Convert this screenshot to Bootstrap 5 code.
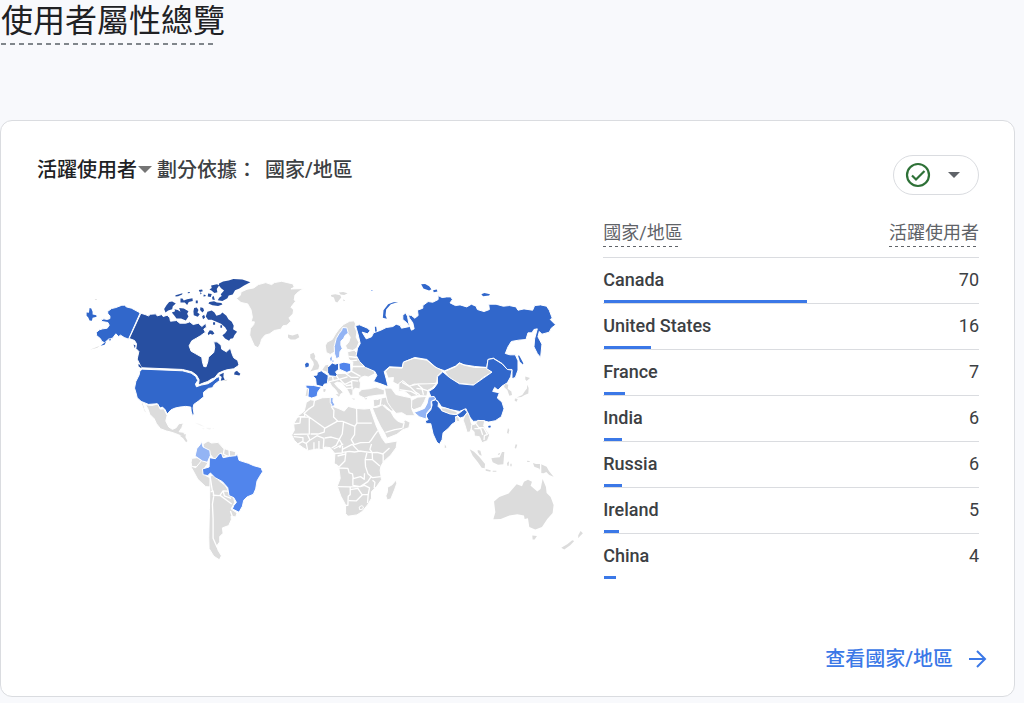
<!DOCTYPE html>
<html lang="zh-Hant">
<head>
<meta charset="utf-8">
<meta name="viewport" content="width=device-width, initial-scale=1">
<title>使用者屬性總覽</title>
<link href="https://cdn.jsdelivr.net/npm/bootstrap@5.3.0/dist/css/bootstrap.min.css" rel="stylesheet">
<style>
  body { background: #f8f9fc; color: #202124; font-family: Roboto, "Noto Sans CJK TC", sans-serif; }
  .page-head { padding-left: 1px; }
  .page-title { font-size: 32px; line-height: 43px; font-weight: 400; }
  .dashes { height: 2px; margin-right: 11px; background: repeating-linear-gradient(90deg, #80868b 0 5px, transparent 5px 9px); }
  .dashes-sm { height: 1px; margin-right: 2px; background: repeating-linear-gradient(90deg, #5f6368 0 3px, transparent 3px 6px); }
  .overview { margin: 75px 9px 6px 0; border: 1px solid #dadce0; border-radius: 12px; --bs-card-inner-border-radius: 11px; }
  .overview-head { padding: 34px 35px 0 36px; }
  .overview-main { padding: 25px 35px 0 36px; }
  .overview-foot { padding: 64px 27px 22px; }
  .heading { font-size: 20px; line-height: 30px; font-weight: 500; }
  .metric { color: #202124; font-weight: 500; line-height: 30px; font-size: 20px; }
  .split { color: #3c4043; }
  .status { width: 86px; height: 40px; border: 1px solid #dadce0; padding: 0 17px 0 11px; }
  .data-col { flex: 0 0 40%; padding-left: 1px; }
  .map { flex: 1 1 0; min-width: 0; }
  .users { color: #3c4043; font-size: 18px; line-height: 26px; }
  .users th, .users td { padding: 0; }
  .users thead tr { height: 37px; border-bottom: 1px solid #dadce0; }
  .users thead th { color: #5f6368; font-weight: 400; vertical-align: top; }
  .users tbody tr { position: relative; height: 46px; border-bottom: 1px solid #dadce0; }
  .users tbody tr:last-child { border-bottom-color: transparent; }
  .users tbody th { font-weight: 500; }
  .users tbody th, .users tbody td { vertical-align: middle; }
  .meter { position: absolute; left: 1px; bottom: -1px; height: 3px; background: #3b78e7; }
  .more { color: #3b78e7; font-size: 20px; line-height: 30px; font-weight: 500; }
  .land { fill: #dcdcdc; } .b1 { fill: #93b4f4; } .b2 { fill: #5185ec; } .b3 { fill: #3167cb; } .b4 { fill: #274fa1; }
  .map path { stroke: #fff; stroke-width: 3; stroke-linejoin: round; }
  .map .bits { stroke: none; }
  .map .borders { fill: none; stroke-width: 4; }
</style>
</head>
<body>
<header class="page-head d-flex">
  <div>
    <h1 class="page-title m-0">使用者屬性總覽</h1>
    <div class="dashes"></div>
  </div>
</header>
<main class="card overview">
  <div class="overview-head d-flex justify-content-between align-items-start">
    <h2 class="heading m-0 d-flex align-items-center">
      <button class="metric btn border-0 p-0 d-flex align-items-center" type="button">活躍使用者<svg width="16" height="8" viewBox="0 0 16 8" aria-hidden="true"><path d="M1 0h14L8 7z" fill="#757575"/></svg></button>
      <span class="split d-flex gap-2 ms-1"><span>劃分依據：</span><span>國家/地區</span></span>
    </h2>
    <button class="status btn rounded-pill bg-white d-flex align-items-center justify-content-between" type="button" aria-label="資料品質">
      <svg width="26" height="26" viewBox="0 0 26 26" fill="none" stroke="#2e7137" stroke-width="2.2" aria-hidden="true"><circle cx="13" cy="13" r="11"/><path d="M7 13.500l4 4 8.500-8.500"/></svg>
      <svg width="14" height="8" viewBox="0 0 14 8" aria-hidden="true"><path d="M1 1h12L7 7z" fill="#5f6368"/></svg>
    </button>
  </div>
  <div class="overview-main d-flex">
    <svg class="map" viewBox="37 220 566 360" role="img" aria-label="各國活躍使用者地圖">
      <!-- North America -->
      <g transform="translate(80 270) scale(.33333)">
        <path class="b3" d="M83 125L95 116 108 113 126 106 134 106 140 111 155 115 181 129 146 208 133 203 122 196 116 200 108 192 98 205 86 208 74 219 65 214 62 207 50 197 49 188 58 180 68 177 82 175 88 166 84 158 66 155 64 150 72 147 82 149 90 146 90 138 84 132z"/>
        <path class="b3 bits" d="M20 128L27 129 29 114 34 116 38 126 38 134 49 136 50 141 38 144 36 153 29 152 25 143 20 138zM62 228l17-13-5 10zM88 208l6-2-4 8z"/>
        <path class="land bits" d="M30 240l30-12-8 6zM45 88h6v2h-6z"/>
        <path class="b4" d="M183 130L196 134 206 138 212 133 228 132 232 138 246 134 250 140 262 136 270 144 272 154 290 152 300 160 318 160 330 156 340 164 356 160 366 170 378 160 380 172 372 178 377 187 362 198 350 205 336 213 328 228 334 244 348 252 366 262 368 276 372 290 379 291 384 276 386 262 402 248 405 232 402 216 412 216 424 226 426 238 440 246 452 235 457 252 462 264 474 272 478 286 462 297 442 300 430 304 416 310 405 324 395 328 384 335 370 340 356 346 358 330 350 316 336 306 308 299 186 294 180 284 172 268 177 245 168 236 170 222 164 212 148 206z"/>
        <path class="b4 bits" d="M418 41l12-6 17-3 14-5 27 2 24 8-19 10-14 9-13 5-7 13-12 3-4 8-15 8-14-2 5-8 7-5-3-5 10-11-9-7-7-9zM394 47l18-4 6 4-7 10 2 10-9 2-9-7-6-3 7-5zM385 71l11 1-3 9-9-1zM397 81l5-3 3 12-7-1zM389 96l14-2 8 4 14 1 3 5-13 4-17-2-12-5zM372 74l6 2-1 3-6 1zM357 60l10-1 2 5-9 2zM361 67l5 3-4 4zM324 67l6-1 0 3-6 1zM287 76l11-3 10-3-1 4-12 5-8 1zM302 86l6 0 4 6 10-4 16-3 1 8-12 3-5 9-7-7-13 0zM253 117l7-11 8-10 9-1 11 6-9 8-2 9-12 4-8 6zM276 128L286 124 284 118 294 120 302 126 298 114 312 116 326 124 322 132 326 140 318 152 304 146 290 146 284 138zM348 92h6v8h-6zM343 114l8-1 5 7-3 8 7 5-6 8-12-5-1-12zM362 112l8 2 3 8-5 6-7-8zM367 139l6-4 3 8-6 5zM383 126L396 122 404 128 410 138 422 134 428 128 440 138 446 148 456 156 462 168 460 178 472 186 464 196 460 205 452 207 448 213 436 206 428 196 436 190 442 182 436 172 424 162 410 156 396 150 385 150 378 140zM384 190l6-9 8 2 6 8-6 4-7-3-5 4zM400 157h6v8h-6zM422 166h5v8h-5zM465 307l7-4 3 4 7 5-3 5-16-3zM418 316l14-7-1 13 4 8-12 3 3-11zM161 224l6 3-2 8zM176 282l9 8-1 5-8-6z"/>
        <path class="b3" d="M187 298L308 303 334 310 348 320 354 332 347 343 350 351 364 346 384 342 398 334 410 324 418 320 420 332 404 344 398 354 386 356 371 368 372 381 356 394 342 404 340 415 343 434 338 437 334 424 333 412 318 410 300 412 286 415 274 420 262 433 256 420 248 412 240 415 232 402 206 404 184 395 172 384 168 368 164 355 168 335 178 315 180 304z"/>
        <path class="land" d="M197 405l19 2 18-4 7 15 11-1 10 20-4 17 9 18 11 7 11-5 8-12 14-2-5 14-8 12 15 2 2 15 10 12-9-2-9-13-19-8-15-5-13-3-18-7-12-15-7-15-13-13-6-17zM183 396l7 5 5 18 6 12-7-5z"/>
        <path class="land bits" opacity=".3" d="M345 459l15 4 15 8-12-3zM380 474l14 1-3 5-10-3zM367 475l8 2-5 2zM398 475l5 1-3 2z"/>
        <path class="land bits" d="M426 334l18-5-5 5z"/>
      </g>
      <!-- Greenland, Europe and the Near East -->
      <g transform="translate(240 270) scale(.33333)">
        <path class="land" d="M-10 86L2 76 4 66 22 58 42 54 56 44 78 38 96 44 104 38 126 34 160 42 164 52 154 57 192 56 176 66 166 76 164 90 168 94 160 104 154 112 162 120 160 132 148 144 154 154 142 166 130 168 124 178 104 182 90 192 76 196 66 208 62 222 55 234 44 228 36 210 30 196 32 176 42 164 44 156 34 156 38 142 34 120 24 102 4 98z"/>
        <path class="land bits" d="M145 194l14 3 16-5 4 10-12 7-14 0-8-6zM274 75l13-2 15 3 3 7-12 15-6-3-4-12-8-3zM298 68l13-2 13 4-10 5-11-1zM311 88l6 4-5 2zM212 253l10-4 5 10-2 8 8 7 6 14-3 10-10 3-14 4 6-9 5-12-2-8-9-12zM196 347l6 2 0 8-4 22 9-1 2-23z"/>
        <path class="land" d="M257 228L262 217 278 209 288 192 298 178 312 164 330 154 344 153 348 162 346 172 352 186 350 202 358 218 352 234 340 242 322 238 318 228 328 216 332 202 324 190 312 184 300 196 292 222 286 246 272 254 260 248z"/>
        <path class="b1" d="M290 206L298 192 306 182 309 173 322 174 326 190 317 196 312 206 304 214 304 226 308 236 301 246 300 262 290 267 285 252 284 230z"/>
        <path class="land" d="M324 246l20-5 8 8 2 15 13 7 5 14 12 11 20 5 2 11-20 10-10-3-12 4-5 8 4 9-2 18-14-3-7 7 0 14-8 1-9-17-16-20-14-3-8 4 10 12 9 7 7 8-13 9-10-17-12-11-5-10-7 0-2-10 5-8 16-2 7-8 18 0 19-1 10-7 3-26-13-9z"/>
        <path class="borders" d="M327 260l26 3M329 274l24-3M335 290l40 0M335 304l28 16M291 318l7 11 26-8M315 309l20 14 22 0M302 330l14 14 22-11M336 332l2 28M318 348l20-3M267 336l30-7M356 334l-20-2M279 319l2 14M317 356l24-1"/>
        <path class="b3" d="M219 317l13-1 1-8 12-5 10 7 11 7-1 10-2 15-9 1-4 8-20-5-2-19z"/>
        <path class="b3" d="M264 292l8-6 5-7 10 4 10-3 0 19-9 7 5 9-5 5-18-2-6-10z"/>
        <path class="b2" d="M298 281l15-4 20 4 1 22-12 5-23-10z"/>
        <path class="b2" d="M199 346l23 1 23 5-10 14-3 14-16 5-11-4 2-24-8-3z"/>
        <path class="b3 bits" d="M196 283l6-5 6 4-1 8-9 3z"/>
        <path class="b1 bits" d="M271 266l5-7 1 10-3 6zM278 272h4v4h-4zM395 60h4v3h-4z"/>
        <path class="land bits" d="M248 301l9-14 9-2-2 22-7-3zM288 373l14 1-4 7zM252 357l7 2-3 8-5-2zM336 386l10 1-2 3zM373 387l10-3-3 5z"/>
      </g>
      <!-- Africa and Arabia -->
      <g transform="translate(280 380) scale(.33333)">
        <path class="land" d="M80 68L92 60 106 62 128 54 152 53 162 60 160 80 176 86 194 94 206 80 230 86 254 88 272 86 278 104 290 138 300 160 308 176 318 190 353 184 350 204 334 226 312 246 304 260 302 272 306 300 292 320 276 336 276 356 264 376 248 396 232 406 205 410 198 402 198 376 184 350 173 320 182 296 178 266 164 250 166 222 152 204 136 202 130 210 112 208 86 213 70 204 54 192 44 182 36 166 44 152 42 132 56 108 74 94z"/>
        <path class="borders" d="M105 60l-3 18-16 11-14 13M52 111h23v-9M43 132l18-2 2-18M75 102l60 43M65 112h24M89 113v50l-47 1M93 163l22 0 19-6 1-13M155 80l8 12-1 20 12 12-39 22M231 84l1 46h45M173 125l16 0 37 15 6-10M192 126l-4 37-9 16 8 14-7 12M226 140l-1 25-10 15 9 15 19-6 26-1 7-8 8-12 11-15M135 175l20-3 24 7M179 179l-9 18-14 8M133 176l-2 31M92 181l20-13 21 8M83 163l8 18-11 10 4 20M103 188v22M118 184v24M42 171l28 3 0 11M52 195l16-9 13 6M162 208l29-15M160 222l28-2 1-22M187 210l31-16 20 21-13 2-16-2-20 3M199 218l-3 26-18 18-10-8M198 223l-24 6M239 214l38 5 16-1 17 5 20-18M276 193l-5 16 7 10 1 21M311 222v26M262 220l-5 20 22 0 22 19M257 241l1 20 7 21 14 12 25-3M178 265l27 1 4 14 10 3 2 14 22-6 11 8 1-18M220 296v21l22 4 23-15 10-15M174 321l36 1 32-1M212 322l0 23-6 5-1 27-12 1M213 330l22-4 13 20-18 18-22-1M242 321l13-4 15 8-4 20-17 0M266 345l-2 25M279 302l7 6-2 18"/>
        <path class="land" d="M239 382l8-4 5 4-3 7-9 1z"/>
        <path class="land" d="M350 301l2 10-7 20-11 27-11 3-4-12 5-13 0-13 13-7z"/>
        <path class="b1" d="M152 54l9-1-1 12 5 9-5 9-8-15z"/>
        <path class="land" d="M237 39l10-10 22-2 21-5 25 9-1 14-18 1-27 4-14 5-17-8zM281 60l43-9 14 23 10 18-13 2-20-18-15 8-17-2z"/>
        <path class="land" d="M278 84L295 82 308 75 322 88 334 96 344 114 356 125 370 130 376 120 392 128 388 144 370 150 352 164 322 176 315 160 304 142 292 118z"/>
        <path class="borders" d="M305 56l-3 20-21 8M318 158l28-8 22-4M352 120l22 8-4 18"/>
        <path class="land" d="M315 25l20 0 14 19 20 5 25 5 5 18-2 16 9 20-24 0-15-9-17 2-15-17-11-16-6-25z"/>
        <path class="land" d="M397 61l18-9 26-2-6 15-10 17-22 8-7-6z"/>
      </g>
      <!-- Asia -->
      <g transform="translate(350 275) scale(.33333)">
        <path class="b3" d="M18 152L30 150 54 160 62 168 54 177 38 172 50 192 66 186 72 174 94 166 110 158 130 155 140 148 152 152 156 160 180 155 172 144 160 134 160 122 168 114 174 124 178 146 186 166 194 162 190 144 180 130 176 120 186 122 196 130 206 122 204 106 220 100 220 92 236 80 250 82 266 74 266 62 278 68 292 66 304 66 309 74 302 84 318 92 332 90 352 96 366 88 380 94 384 104 404 110 420 104 418 88 440 88 462 94 480 92 500 96 506 106 524 102 550 106 556 92 574 90 592 94 600 106 609 130 603 134 619 150 606 160 600 172 578 178 570 170 566 186 578 208 574 248 564 236 554 216 556 192 564 162 554 164 548 174 536 174 530 194 508 196 486 200 476 216 468 236 482 240 498 240 506 258 506 286 498 308 488 312 488 284 474 284 458 266 432 250 416 254 412 278 376 275 344 270 330 264 318 274 286 288 262 280 232 254 196 248 162 262 158 278 120 276 104 290 110 312 116 336 96 328 72 320 82 302 76 290 48 278 30 260 20 242 24 220 32 206 26 180z"/>
        <path class="b3 bits" d="M146 81L124 88 110 104 108 122 112 132 100 129 102 106 116 88 132 82zM215 28l12-1 12 7 7 9-7 4-17-6zM251 46l11-2 2 6-11 2zM396 58l9-4 17 4-3 4-18 2zM76 156h4l2 13-5 2zM506 242l4 1 12 22-1 4-9-8z"/>
        <path class="land" d="M108 290L120 278 158 280 162 262 194 250 232 256 256 276 280 288 264 304 262 324 240 330 216 328 194 328 180 334 160 318 146 330 130 322 132 308 116 310z"/>
        <path class="land" d="M148 326L160 318 180 334 206 328 262 326 248 340 236 346 232 364 208 362 186 366 166 350 148 350z"/>
        <path class="borders" d="M158 323l25 14 15 15 13 8M205 329l15 14 18 6M201 341l17 2 4 17M150 345l35 5 18 10M37 337l30-3M81 375l25-11"/>
        <path class="land" d="M286 290L320 275 330 265 344 271 376 278 410 278 428 292 402 308 374 330 330 326 300 310z"/>
        <path class="b3" d="M280 291L300 308 330 327 372 331 402 310 428 292 412 282 416 254 432 251 458 267 474 284 488 286 484 306 474 324 458 334 446 346 436 338 430 350 450 354 444 370 458 382 464 402 456 426 438 438 418 442 400 438 372 440 358 424 350 402 330 410 300 404 276 396 264 378 246 370 238 350 254 340 264 326 264 306z"/>
        <path class="b3" d="M246 379l13-4 8 9-1 11 14 14 34 10 13-2 18-14 9 9-10 14-12 4-8-8-3 5-3 15-10 6-11 13-16 13-3 21-8 14-8-7-11-24-7-31-13 0-4-9 9-3-7-13 15-17 4-14z"/>
        <path class="land" d="M274 399l15 1 34 11 0 8-21-1-25-10zM318 426l9 0 5 15-11-1z"/>
        <path class="b1" d="M194 413l11-4 20-8 8-15 4-19 17-2 5 8-14 7 1 18-14 17-2 18-12-4-9-3z"/>
        <path class="land bits" d="M467 327l10 3-2 12 11 8 2 11-8 2-6-17-10-9zM528 305l14 5-10 9-4-5zM534 330l4 10-1 16-11 5-10 6-14 1 17-7 8-12 6-8zM497 371l8 2-3 8-6-3z"/>
        <path class="b3 bits" d="M417 454h5v4h-5z"/>
      </g>
      <!-- South America -->
      <g transform="translate(180 430) scale(.33333)">
        <path class="land" d="M70 43l15-9 10 6 20-2 16 18 15 5 22 5-2 15-22-2-22 6-20 3-14-19-17-12zM36 86l16-2 14 9-13 18-17 0-2-13z"/>
        <path class="land" d="M32 109l16 5 18-22 19 7-13 20 3 17 17 9 1 27-15-1-24-22-15-28z"/>
        <path class="land" d="M91 139l14-3 14 18 17 13 10 16 15 17 4 19-11 19 18 12-4 12-14-2 1 10-8 18-19 7 2 16-10 10 0 16-9 12 4 13 10 17-6 12-17-11-14-23-1-33 2-85z"/>
        <path class="borders" d="M93 187l7-3 2 15-4 25 2 42 0 60 12 27M99 197l21 1 10-14 18 1M122 198l34 25M130 184l4 15 20 7M134 55l-3 18 14 8M148 59l1 20M91 140l7 45M113 351l8 18M152 244l7 20"/>
        <path class="b1" d="M51 57l10-12 4-10 5 17 20 10 2 15-9 21-15-4-22-15z"/>
        <path class="b2" d="M89 84L107 87 118 73 125 70 130 84 150 80 168 78 173 74 178 92 206 101 222 108 244 114 249 126 240 140 232 154 228 178 221 194 202 202 192 212 188 230 178 248 158 238 162 228 170 218 162 204 148 198 144 174 128 156 106 144 92 130 84 138 70 135 68 118 88 112z"/>
        <path class="land bits" d="M0 18l18-5-1 10 6 11-4 4-9-12z"/>
      </g>
      <!-- South-east Asia and Oceania -->
      <g transform="translate(430 390) scale(.33333)">
        <path class="land" d="M101 91l5-13 9-10 6 13 4 17 4 8-7 21-9 1-6-21z"/>
        <path class="land" d="M126 106l11-3 8-11 21 1-3 15 8 13 10 15-7 17-16 6-8-18-15-2-1-13-8-7z"/>
        <path class="borders" d="M139 101l9 12 15 1 11 20-9 4-1 13M135 117l19 0 6 19"/>
        <path class="land bits" d="M192 389L198 368 194 336 210 322 238 312 262 284 278 290 284 276 296 270 308 276 304 288 324 306 334 298 340 268 350 292 352 310 364 322 373 346 370 370 354 388 338 412 318 420 300 412 296 386 286 388 284 378 264 374 240 378 214 388zM309 438l14 1-7 11-6 0zM454 424l7 7-9 9-5 6 0-9zM396 475l18-11 15-12 6 2-12 13-18 13zM311 220l9 3 14 0 18 8 7 13 14 17-13-5-9-9-8 4-9-1-3-13-16-6zM293 213l9 1-2 3-7-1zM186 206l10-2 15-1 7-16 7 0-1 12-2 25-16 1-16-7zM121 179l13 7 16 16 17 21-1 13-9-2-12-17-15-19zM145 181l8 2 4 15-6-2-6-9zM169 238l15 4-1 4-14-3zM190 243h11v3h-11zM233 220l6-5-1 13-4 0zM236 115l4 6-3 12-4-4zM259 164l5 1-4 12-4-3zM46 164l5 9-5 3zM205 193l8-4-4 8zM243 222h4v8h-4z"/>
        <path class="borders" d="M334 222v32"/>
        <path class="b3 bits" d="M178 108h6v5h-6z"/>
      </g>
    </svg>
    <div class="data-col">
      <table class="users w-100">
        <thead><tr>
          <th scope="col"><span class="d-inline-block">國家/地區<span class="dashes-sm d-block"></span></span></th>
          <th scope="col" class="text-end"><span class="d-inline-block">活躍使用者<span class="dashes-sm d-block"></span></span></th>
        </tr></thead>
        <tbody>
          <tr><th scope="row">Canada<span class="meter" style="width:54%"></span></th><td class="text-end">70</td></tr>
          <tr><th scope="row">United States<span class="meter" style="width:12.4%"></span></th><td class="text-end">16</td></tr>
          <tr><th scope="row">France<span class="meter" style="width:5.5%"></span></th><td class="text-end">7</td></tr>
          <tr><th scope="row">India<span class="meter" style="width:4.7%"></span></th><td class="text-end">6</td></tr>
          <tr><th scope="row">Russia<span class="meter" style="width:4.7%"></span></th><td class="text-end">6</td></tr>
          <tr><th scope="row">Ireland<span class="meter" style="width:4%"></span></th><td class="text-end">5</td></tr>
          <tr><th scope="row">China<span class="meter" style="width:3.2%"></span></th><td class="text-end">4</td></tr>
        </tbody>
      </table>
    </div>
  </div>
  <div class="overview-foot d-flex justify-content-end">
    <a class="more text-decoration-none d-flex align-items-center gap-3" href="#">查看國家/地區
      <svg width="18" height="20" viewBox="0 0 18 20" fill="none" stroke="currentColor" stroke-width="2" aria-hidden="true"><path d="M0 10h16M8 2l8 8-8 8"/></svg></a>
  </div>
</main>
<script src="https://cdn.jsdelivr.net/npm/bootstrap@5.3.0/dist/js/bootstrap.bundle.min.js"></script>
</body>
</html>
